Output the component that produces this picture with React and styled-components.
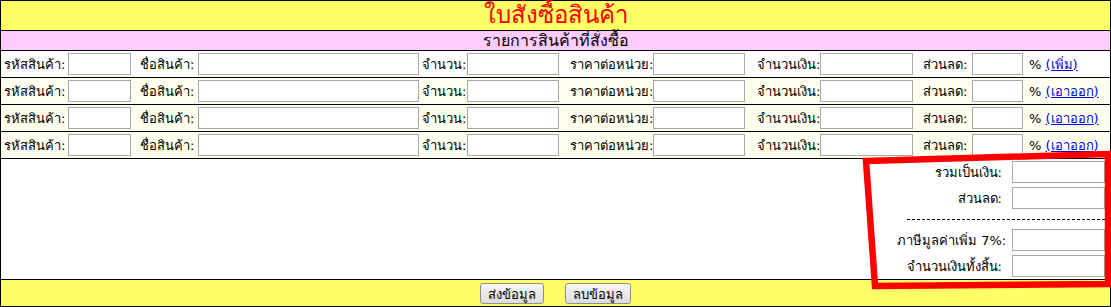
import styled, { createGlobalStyle } from "styled-components";

const GlobalStyle = createGlobalStyle`
  body {
    margin: 0;
    font-family: Tahoma, "DejaVu Sans", "Noto Sans", sans-serif;
    font-size: 13px;
    color: #000;
    background: #fff;
  }
`;

const columns = "67px 72px 58px 224px 45px 103px 83px 104px 63px 103px 49px 57px 1fr";

const items = [
  { bg: "#ffffff", action: "(เพิ่ม)" },
  { bg: "#fffff0", action: "(เอาออก)" },
  { bg: "#fffff0", action: "(เอาออก)" },
  { bg: "#fffff0", action: "(เอาออก)" },
];

const summary = [
  { label: "รวมเป็นเงิน:" },
  { label: "ส่วนลด:" },
  { sep: true },
  { label: "ภาษีมูลค่าเพิ่ม 7%:" },
  { label: "จำนวนเงินทั้งสิ้น:" },
];

function App() {
  return (
    <Page>
      <GlobalStyle />
      <Sheet>
        <TitleBar>ใบสั่งซื้อสินค้า</TitleBar>
        <SubBar>รายการสินค้าที่สั่งซื้อ</SubBar>
        {items.map((it, i) => (
          <ItemRow key={i} $bg={it.bg}>
            <Label $first>รหัสสินค้า:</Label>
            <Cell><Field $w={63} /></Cell>
            <Label>ชื่อสินค้า:</Label>
            <Cell><Field $w={221} /></Cell>
            <Label>จำนวน:</Label>
            <Cell><Field $w={92} /></Cell>
            <Label>ราคาต่อหน่วย:</Label>
            <Cell><Field $w={92} /></Cell>
            <Label>จำนวนเงิน:</Label>
            <Cell><Field $w={93} /></Cell>
            <Label>ส่วนลด:</Label>
            <Cell><Field $w={51} /></Cell>
            <Label>% <ActionLink href="#">{it.action}</ActionLink></Label>
          </ItemRow>
        ))}
        <SummaryArea>
          <SummaryGrid>
            {summary.map((s, i) =>
              s.sep ? (
                <Separator key={i} />
              ) : (
                <SummaryRow key={i}>
                  <SummaryLabel>{s.label}</SummaryLabel>
                  <Cell><Field $w={93} /></Cell>
                </SummaryRow>
              )
            )}
          </SummaryGrid>
        </SummaryArea>
        <Footer>
          <Button>ส่งข้อมูล</Button>
          <Button>ลบข้อมูล</Button>
        </Footer>
      </Sheet>
      <Annotation width="1111" height="307" viewBox="0 0 1111 307">
        <polygon
          points="866,161 1108,154 1108,284 875,286"
          fill="none"
          stroke="#ff0000"
          strokeWidth="6.5"
          strokeLinejoin="miter"
        />
      </Annotation>
    </Page>
  );
}

const Page = styled.div`
  position: relative;
  width: 1111px;
  height: 307px;
`;

const Sheet = styled.div`
  width: 1111px;
  box-sizing: border-box;
  border: 1px solid #000;
  display: flex;
  flex-direction: column;
`;

const TitleBar = styled.div`
  height: 29px;
  background: #ffff66;
  border-bottom: 1px solid #000;
  color: #ff0000;
  font-size: 24px;
  line-height: 29px;
  text-align: center;
`;

const SubBar = styled.div`
  height: 19px;
  background: #ffccff;
  border-bottom: 1px solid #000;
  font-size: 16px;
  line-height: 19px;
  text-align: center;
`;

const ItemRow = styled.div`
  display: grid;
  grid-template-columns: ${columns};
  align-items: center;
  height: 26px;
  background: ${({ $bg }) => $bg};
  border-bottom: 1px solid #000;
`;

const Label = styled.div`
  white-space: nowrap;
  padding-left: ${({ $first }) => ($first ? "3px" : "0")};
`;

const Cell = styled.div`
  display: flex;
  align-items: center;
`;

const Field = styled.input.attrs({ type: "text" })`
  width: ${({ $w }) => $w}px;
  height: 22px;
  box-sizing: border-box;
  margin: 0;
  padding: 1px 2px;
  border: 1px solid #a9a9a9;
  background: #fff;
  font: inherit;
`;

const ActionLink = styled.a`
  color: #0000ee;
  text-decoration: underline;
`;

const SummaryArea = styled.div`
  height: 120px;
  background: #fff;
  border-bottom: 1px solid #000;
  display: flex;
  justify-content: flex-end;
`;

const SummaryGrid = styled.div`
  width: 213px;
  display: flex;
  flex-direction: column;
`;

const SummaryRow = styled.div`
  display: grid;
  grid-template-columns: 115px 98px;
  align-items: center;
  height: 26px;
`;

const SummaryLabel = styled.div`
  text-align: right;
  padding-right: 10px;
  white-space: nowrap;
`;

const Separator = styled.div`
  height: 16px;
  margin-left: 10px;
  box-sizing: border-box;
  padding-top: 8px;
  &::after {
    content: "";
    display: block;
    border-top: 1px dashed #000;
  }
`;

const Footer = styled.div`
  height: 26px;
  background: #ffff66;
  display: flex;
  justify-content: center;
  align-items: center;
  gap: 21px;
`;

const Button = styled.button`
  height: 21px;
  padding: 0 7px;
  min-width: 61px;
  font: inherit;
  color: #000;
  border: 1px solid #8f8f8f;
  border-radius: 3px;
  background: linear-gradient(#f6f6f6, #dddddd);
`;

const Annotation = styled.svg`
  position: absolute;
  top: 0;
  left: 0;
  pointer-events: none;
`;

export default App;
